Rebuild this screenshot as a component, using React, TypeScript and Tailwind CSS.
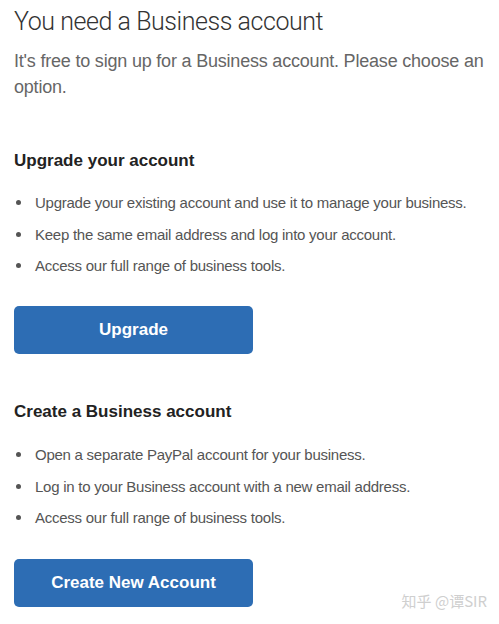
import React from "react";

const Bullets = ({ items }: { items: string[] }) => (
  <ul className="flex flex-col gap-[10.5px]">
    {items.map((t, i) => (
      <li key={i} className="flex items-center text-[15px] leading-[21px] tracking-[-0.25px] text-[#555]">
        <span className="w-[21px] flex pl-[2px]">
          <span className="block w-[5px] h-[5px] rounded-full bg-[#555]" />
        </span>
        <span>{t}</span>
      </li>
    ))}
  </ul>
);

const Button = ({ label }: { label: string }) => (
  <button className="w-[239px] h-[48px] rounded-[5px] bg-[#2d6db4] text-white font-bold text-[17px]">
    {label}
  </button>
);

const App = () => {
  return (
    <div
      className="relative w-[499px] h-[624px] bg-white px-[14px] overflow-hidden"
      style={{ fontFamily: '"Liberation Sans", Arial, sans-serif' }}
    >
      <h1
        className="pt-[6px] text-[25px] leading-[32px] tracking-[-0.45px] font-light text-[#333]"
        style={{ fontFamily: 'Roboto, "Liberation Sans", sans-serif' }}
      >
        You need a Business account
      </h1>
      <p className="mt-[10px] text-[18px] leading-[26px] tracking-[-0.2px] text-[#666]">
        It's free to sign up for a Business account. Please choose an option.
      </p>

      <h2 className="mt-[50px] text-[17px] leading-[22px] font-bold text-[#222]">
        Upgrade your account
      </h2>
      <div className="mt-[20px]">
        <Bullets
          items={[
            "Upgrade your existing account and use it to manage your business.",
            "Keep the same email address and log into your account.",
            "Access our full range of business tools.",
          ]}
        />
      </div>
      <div className="mt-[30px]">
        <Button label="Upgrade" />
      </div>

      <h2 className="mt-[47px] text-[17px] leading-[22px] font-bold text-[#222]">
        Create a Business account
      </h2>
      <div className="mt-[21px]">
        <Bullets
          items={[
            "Open a separate PayPal account for your business.",
            "Log in to your Business account with a new email address.",
            "Access our full range of business tools.",
          ]}
        />
      </div>
      <div className="mt-[31px]">
        <Button label="Create New Account" />
      </div>

      <div
        className="absolute right-[12px] bottom-[12px] text-[15px] text-[#cfcfcf]"
        style={{ fontFamily: '"Noto Sans CJK SC", sans-serif' }}
      >
        知乎 @谭SIR
      </div>
    </div>
  );
};

export default App;
